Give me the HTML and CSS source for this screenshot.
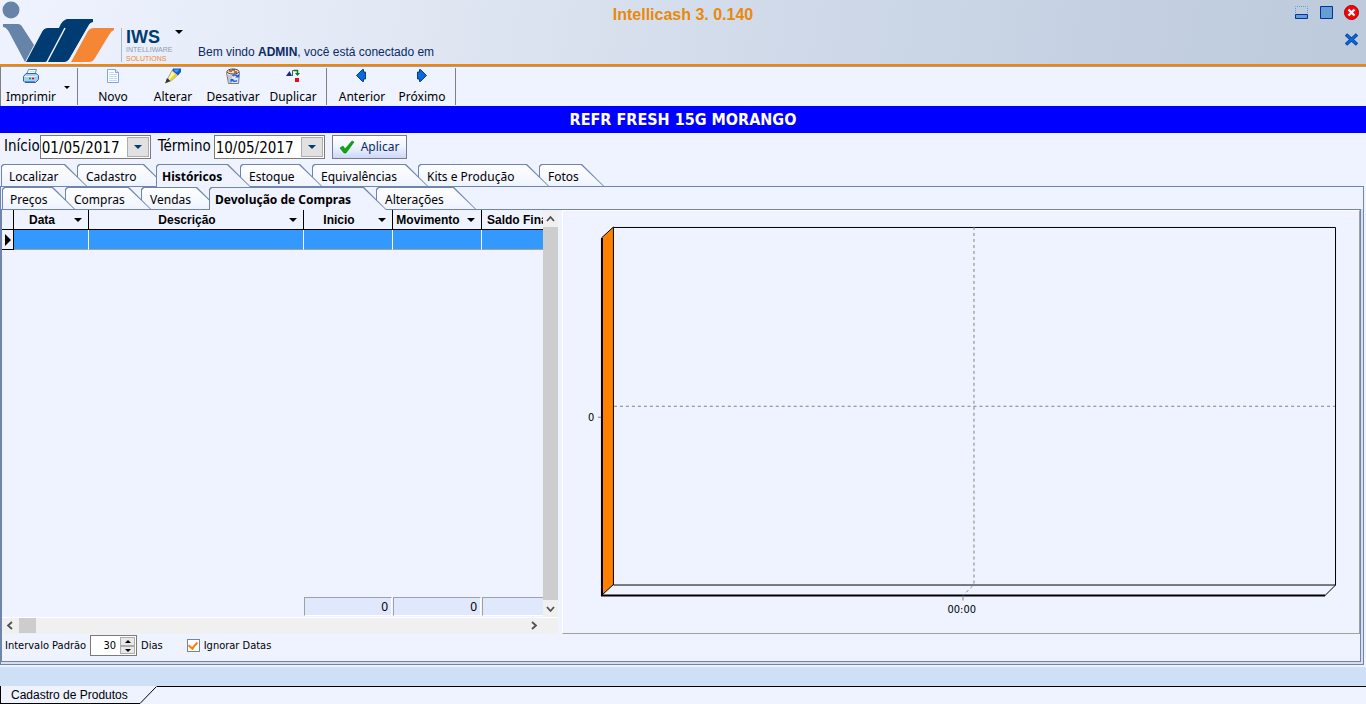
FILE: index.html
```html
<!DOCTYPE html>
<html lang="pt-BR">
<head>
<meta charset="utf-8">
<title>Intellicash</title>
<link rel="stylesheet" href="styles.css">
</head>
<body>
<header class="header">
  <svg class="logo" width="175" height="64" viewBox="0 0 175 64" role="img" aria-label="IWS Intelliware Solutions">
    <circle cx="11" cy="10" r="8.500" fill="#6584a8"/>
    <path d="M3 24h15q3 0 5 4l11 17-9 17L9 32q-3-5-6-5z" fill="#6584a8"/>
    <path d="M26 62l16-30q2-4 6-4h11L67 19h26v3q-3 0-5 4L69 59q-2 3-6 3H48l18-34-16 31q-2 3-5 3z" fill="#003c71"/>
    <path d="M48 62L66 28h-7q3-9 10-9h24v3q-3 0-5 4L69 59q-2 3-6 3z" fill="#003c71"/>
    <path d="M65 28L47 62" stroke="#edf2fd" stroke-width="1.500"/>
    <path d="M71 62l17-31q2-3 6-3h20v2q-3 1-5 5L95 58q-2 4-6 4z" fill="#f58634"/>
    <path d="M121.500 28v34" stroke="#a9b9cc"/>
    <text x="126" y="43" class="logo-iws">IWS</text>
    <text x="126" y="52" class="logo-name">INTELLIWARE</text>
    <text x="126" y="61" class="logo-sub">SOLUTIONS</text>
  </svg>
  <button class="logo-menu" aria-label="Menu"><span class="caret"></span></button>
  <p class="welcome">Bem vindo <b>ADMIN</b>, você está conectado em</p>
  <h1 class="title">Intellicash 3. 0.140</h1>
  <div class="window-buttons">
    <button aria-label="Minimizar"><svg width="15" height="15" viewBox="0 0 15 15"><path d="M1.500 8V1.500h12V8" fill="none" stroke="#649ed2" stroke-dasharray="1 1"/><path d="M1.500 9.500h12v4h-12z" fill="#649ed2" stroke="#0032a0"/></svg></button>
    <button aria-label="Maximizar"><svg width="15" height="15" viewBox="0 0 15 15"><path d="M1.500 1.500h12v12h-12z" fill="#649ed2" stroke="#0032a0"/></svg></button>
    <button aria-label="Fechar"><svg width="15" height="15" viewBox="0 0 15 15"><circle cx="7.500" cy="7.500" r="7" fill="#f00" stroke="#a00010"/><path d="M4.500 4.500l6 6m0-6l-6 6" stroke="#fff" stroke-width="2.400"/></svg></button>
    <button class="close-page" aria-label="Fechar página"><svg width="15" height="15" viewBox="0 0 15 15"><path d="M2 2.500l11 10m0-10L2 12.500" stroke="#003c9c" stroke-width="3.400"/><path d="M2.500 3l10 9m0-9l-10 9" stroke="#0a6ad8" stroke-width="2"/></svg></button>
  </div>
</header>

<nav class="toolbar">
  <button class="tool print"><svg width="16" height="16" viewBox="0 0 16 16"><path d="M5.500 1.500h8l-2 5h-8z" fill="#fff" stroke="#5a8fd0"/><path d="M6.500 3.500h5M5.500 5.500h5" stroke="#e0d8d8"/><path d="M.5 8.500l2.500-3h10l2.500 2v4l-3 3H2l-1.500-1.500z" fill="#a9cdf5" stroke="#2e63b0"/><path d="M1.500 8.500h10l3-1" fill="none" stroke="#e8f3ff"/><path d="M6 10.500h2" stroke="#0a0" stroke-width="1.500"/><path d="M9 10.500h2" stroke="#e00" stroke-width="1.500"/><path d="M2 13.500h10" stroke="#4f8fd8"/></svg>Imprimir</button>
  <button class="tool-drop" aria-label="Opções de impressão"><span class="caret small"></span></button>
  <span class="sep"></span>
  <button class="tool"><svg width="16" height="16" viewBox="0 0 16 16"><path d="M2.500 1.500h8l3 3v10h-11z" fill="#fff" stroke="#7da7d8"/><path d="M10.500 1.500v3h3" fill="#d6e8fa" stroke="#7da7d8"/><path d="M4 4.500h5M4 6.500h8M4 8.500h8M4 10.500h8M4 12.500h8" stroke="#c3dbf3"/></svg>Novo</button>
  <button class="tool"><svg width="16" height="16" viewBox="0 0 16 16"><path d="M8 .5h8V4l-3 3.500-6-5z" fill="#0d5bc8"/><path d="M9.500 1.500h5l-3 3-2.500-2z" fill="#4a97f0"/><path d="M7 2.500l5.500 5L6 13l-4 1 1.500-5z" fill="#fff3a0" stroke="#8d8a60" stroke-width=".7"/><path d="M10.500 5.500l2 2L6 13l-1.500-1.500z" fill="#e5cf4a"/><path d="M0 15.500L2 10l3.500 3z" fill="#333"/></svg>Alterar</button>
  <button class="tool"><svg width="16" height="16" viewBox="0 0 16 16"><path d="M1.500 4.500h13l-1 11h-10z" fill="#e6e6ee" stroke="#778"/><path d="M4 7v8M6 7v8" stroke="#aab"/><ellipse cx="8" cy="3.500" rx="6" ry="2.500" fill="#f5e2a0" stroke="#444"/><path d="M4 3h3M9 4h3" stroke="#c33" stroke-width="1.500"/><path d="M7 2h3" stroke="#333"/><path d="M12.500 8a3.500 3.500 0 0 0-5 0M6.500 11a3.500 3.500 0 0 0 5.500 1.500" fill="none" stroke="#1464f0" stroke-width="1.600"/><path d="M10 9.500h4V6zM9 11H5.500v3.500z" fill="#1464f0"/></svg>Desativar</button>
  <button class="tool"><svg width="16" height="16" viewBox="0 0 16 16"><path d="M1 8l3.500-5L7 8z" fill="#142d82"/><path d="M7.500 8V2.500H12" fill="none" stroke="#555"/><path d="M9 2.500h3.500V6" fill="none" stroke="#087a18" stroke-width="1.500"/><path d="M10 5h5l-2.500 3z" fill="#087a18"/><path d="M10 10h4v4h-4z" fill="#f20a0a"/></svg>Duplicar</button>
  <span class="sep"></span>
  <button class="tool"><svg width="16" height="16" viewBox="0 0 16 16"><path d="M2.500 7.500l6-6h1V4h2v7h-2v2.500h-1z" fill="#0a6ad8" stroke="#003c9c"/></svg>Anterior</button>
  <button class="tool"><svg width="16" height="16" viewBox="0 0 16 16"><path d="M12.500 7.500l-6-6h-1V4h-2v7h2v2.500h1z" fill="#0a6ad8" stroke="#003c9c"/></svg>Próximo</button>
  <span class="sep"></span>
</nav>

<h2 class="banner">REFR FRESH 15G MORANGO</h2>

<form class="filters">
  <label for="ini">Início</label>
  <span class="date"><input id="ini" type="text" value="01/05/2017"><button type="button" aria-label="Abrir calendário"><span class="caret blue"></span></button></span>
  <label for="fim">Término</label>
  <span class="date"><input id="fim" type="text" value="10/05/2017"><button type="button" aria-label="Abrir calendário"><span class="caret blue"></span></button></span>
  <button type="button" class="apply"><svg width="16" height="16" viewBox="0 0 16 16"><path d="M1 9l3-2 2 3 7-8 2 1-8 11H5z" fill="#0aa80a" stroke="#067a06" stroke-width=".6"/></svg>Aplicar</button>
</form>

<div class="tabs" role="tablist">
  <button class="tab w-loc" role="tab">Localizar</button>
  <button class="tab w-cad" role="tab">Cadastro</button>
  <button class="tab w-his selected" role="tab" aria-selected="true">Históricos</button>
  <button class="tab w-est" role="tab">Estoque</button>
  <button class="tab w-equ" role="tab">Equivalências</button>
  <button class="tab w-kit" role="tab">Kits e Produção</button>
  <button class="tab w-fot" role="tab">Fotos</button>
</div>
<main class="outer">
  <div class="tabs" role="tablist">
    <button class="tab w-pre" role="tab">Preços</button>
    <button class="tab w-com" role="tab">Compras</button>
    <button class="tab w-ven" role="tab">Vendas</button>
    <button class="tab w-dev selected" role="tab" aria-selected="true">Devolução de Compras</button>
    <button class="tab w-alt" role="tab">Alterações</button>
  </div>
  <section class="inner">
    <div class="split">
      <div class="grid">
        <div class="grid-main">
          <div class="grid-view">
            <table class="rows">
              <colgroup><col class="c-mark"><col class="c-data"><col class="c-desc"><col class="c-num"><col class="c-num"><col class="c-num"></colgroup>
              <thead><tr>
                <th></th>
                <th><div class="head"><span>Data</span><i class="caret"></i></div></th>
                <th><div class="head"><span>Descrição</span><i class="caret"></i></div></th>
                <th><div class="head"><span>Inicio</span><i class="caret"></i></div></th>
                <th><div class="head"><span>Movimento</span><i class="caret"></i></div></th>
                <th><div class="head last"><span>Saldo Final</span><i class="caret"></i></div></th>
              </tr></thead>
              <tbody><tr><td class="marker"><span></span></td><td></td><td></td><td></td><td></td><td></td></tr></tbody>
            </table>
            <div class="totals"><span>0</span><span>0</span><span></span></div>
          </div>
          <div class="vscroll">
            <svg width="15" height="17" viewBox="0 0 15 17"><path d="M4 11l3.500-4 3.500 4" fill="none" stroke="#505050" stroke-width="1.800"/></svg>
            <div class="thumb"></div>
            <svg width="15" height="17" viewBox="0 0 15 17"><path d="M4 7l3.500 4L11 7" fill="none" stroke="#505050" stroke-width="1.800"/></svg>
          </div>
        </div>
        <div class="hscroll">
          <svg width="17" height="15" viewBox="0 0 17 15"><path d="M10 4L6 7.500l4 3.500" fill="none" stroke="#505050" stroke-width="1.800"/></svg>
          <div class="thumb"></div>
          <svg class="end" width="17" height="15" viewBox="0 0 17 15"><path d="M7 4l4 3.500L7 11" fill="none" stroke="#505050" stroke-width="1.800"/></svg>
        </div>
      </div>
      <div class="chart">
        <svg viewBox="0 0 797 423" role="img" aria-label="Gráfico">
          <path d="M38.500 27l12-11v358l-12 11z" fill="#ff8000"/>
          <path d="M38.500 27l12-11M50.500 374l-12 11M773.500 374.500l-11 11" stroke="#000" fill="none"/>
          <path d="M50.500 16.500h723v358h-723z" fill="none" stroke="#000"/>
          <path d="M39 27v359M38 385h725" fill="none" stroke="#000" stroke-width="2"/>
          <path d="M411.500 16v358l-11 11M51 195.500h722" fill="none" stroke="#808080" stroke-dasharray="3 3"/>
          <path d="M35 206.500h3M400.500 386v4" fill="none" stroke="#808080"/>
          <text x="25" y="210">0</text>
          <text x="385" y="403">00:00</text>
        </svg>
      </div>
    </div>
    <div class="options">
      <label for="dias">Intervalo Padrão</label>
      <span class="spin"><input id="dias" type="text" value="30"><span class="spin-buttons"><button aria-label="Mais"><i class="up"></i></button><button aria-label="Menos"><i class="down"></i></button></span></span>
      <span>Dias</span>
      <label class="check"><input type="checkbox" checked>Ignorar Datas</label>
    </div>
  </section>
</main>
<footer class="footer">
  <div class="windows">
    <button class="window-tab">Cadastro de Produtos</button>
    <svg width="17" height="18" viewBox="0 0 17 18"><path d="M0 17.500L16.500 .5" fill="none" stroke="#000"/></svg>
    <div class="rest"></div>
  </div>
</footer>
</body>
</html>
```
FILE: styles.css
```css
* { box-sizing: border-box; }
body {
  margin: 0;
  min-height: 100vh;
  display: flex;
  flex-direction: column;
  background: #eef3ff;
  color: #000;
  font: 12px/16px "Noto Sans", sans-serif;
}
button { border: 0; padding: 0; background: none; font: inherit; color: inherit; }
svg { display: block; flex: none; }
h1, h2, p { margin: 0; }
.caret { flex: none; display: block; width: 0; border: 4px solid transparent; border-top-color: #000; border-bottom: 0; }
.caret.small { border-width: 3px 3px 0; }
.caret.blue { border-top-color: #003c71; }

.header {
  position: relative;
  height: 66px;
  display: flex;
  align-items: flex-start;
  border-bottom: 2px solid #f0870a;
  background: linear-gradient(100deg, #eef3ff 0%, #e4eaf5 25%, #ced8e8 60%, #bccadc 100%);
}
.logo-iws { font: bold 18px "Liberation Sans", sans-serif; fill: #003c71; }
.logo-name, .logo-sub { font: 7px "Liberation Sans", sans-serif; fill: #8a9bb5; }
.logo-sub { fill: #f58634; }
.logo-menu { margin: 30px 15px 0 0; }
.welcome { margin-top: 44px; font: 12px/16px "Liberation Sans", sans-serif; color: #0a2a66; }
.title {
  position: absolute;
  inset: 6px 0 auto;
  text-align: center;
  font: bold 16px/18px "Liberation Sans", sans-serif;
  color: #e8890c;
}
.window-buttons {
  position: relative;
  margin: 5px 7px 0 auto;
  display: grid;
  grid-template-columns: repeat(3, 15px);
  gap: 12px 10px;
}
.close-page { grid-column: 3; }

.toolbar {
  height: 40px;
  display: flex;
  border-top: 1px solid #a0a0a0;
  border-left: 1px solid #808080;
  padding-top: 1px;
}
.tool { width: 60px; display: flex; flex-direction: column; align-items: center; gap: 5px; }
.tool-drop { width: 13px; padding: 18px 3px 0; align-self: flex-start; }
.sep { width: 1px; height: 37px; margin: 0 5px 0 3px; background: #808080; }
.banner {
  background: #00f;
  color: #fff;
  text-align: center;
  font: bold 16px/27px "DejaVu Sans Condensed", "Noto Sans", sans-serif;
}

.filters {
  height: 31px;
  display: flex;
  align-items: flex-start;
  padding: 2px 4px 0;
  font: 15px/22px "DejaVu Sans Condensed", "Noto Sans", sans-serif;
}
.date {
  width: 111px;
  height: 24px;
  display: flex;
  padding: 1px;
  margin-right: 7px;
  border: 1px solid #7a7a7a;
  background: #fff;
}
.date + label { margin-right: 3px; }
.date input { flex: 1; min-width: 0; border: 0; padding: 2px 0 0; background: none; font: inherit; }
.date button { width: 22px; display: grid; place-items: center; background: #e1e1e1; border: 1px solid #adadad; }
.apply {
  width: 75px;
  height: 24px;
  display: flex;
  align-items: center;
  gap: 6px;
  padding-left: 6px;
  border: 1px solid #7a7a8a;
  background: linear-gradient(#fff, #eef3ff 50%, #ccd8f8);
  color: #0a2a66;
  font: 12px/16px "Noto Sans", sans-serif;
}

.tabs { display: flex; position: relative; z-index: 1; height: 23px; margin-bottom: -1px; padding-left: 1px; }
.tab {
  position: relative;
  z-index: 1;
  height: 23px;
  margin-right: -11px;
  padding: 2px 0 0 9px;
  text-align: left;
  white-space: nowrap;
}
.tab::before, .tab::after { content: ""; position: absolute; inset: 0; z-index: -1; }
.tab::before {
  background: #6f85ad;
  clip-path: polygon(0 2px, 2px 0, calc(100% - 23px) 0, 100% 100%, 0 100%);
}
.tab::after {
  background: linear-gradient(#fff, #eef3ff);
  clip-path: polygon(1px 3px, 3px 1px, calc(100% - 24px) 1px, calc(100% - 2px) calc(100% - 1px), 1px calc(100% - 1px));
}
.tab:nth-child(1) { z-index: 7; padding-left: 8px; }
.tab:nth-child(2) { z-index: 6; }
.tab:nth-child(3) { z-index: 5; }
.tab:nth-child(4) { z-index: 4; }
.tab:nth-child(5) { z-index: 3; }
.tab:nth-child(6) { z-index: 2; }
.tab.selected { z-index: 8; padding-left: 6px; font-weight: bold; }
.tab.selected::after {
  background: #eef3ff;
  clip-path: polygon(1px 3px, 3px 1px, calc(100% - 24px) 1px, calc(100% - 1px) 100%, 1px 100%);
}
.w-loc { width: 87px; }
.w-cad { width: 90px; }
.w-his { width: 95px; }
.w-est { width: 83px; }
.w-equ { width: 117px; }
.w-kit { width: 132px; }
.w-fot { width: 66px; }
.w-pre { width: 74px; }
.w-com { width: 87px; }
.w-ven { width: 79px; }
.w-dev { width: 178px; }
.w-alt { width: 101px; }

.outer {
  flex: 1;
  display: flex;
  flex-direction: column;
  margin: 0 2px 2px 0;
  padding: 0 2px 2px 0;
  border: 1px solid #6f85ad;
  background: linear-gradient(#eef3ff 22px, #d9dfea 22px);
}
.inner {
  flex: 1;
  display: flex;
  flex-direction: column;
  border: 1px solid #6f85ad;
  background: #eef3ff;
}
.split { flex: 1; display: flex; gap: 4px; }
.grid { flex: 0 0 556px; min-width: 0; display: flex; flex-direction: column; }
.grid-main { flex: 1; display: flex; border-bottom: 1px solid #fff; }
.grid-view { flex: 1; min-width: 0; overflow: hidden; display: flex; flex-direction: column; justify-content: space-between; }
.rows { width: 569px; table-layout: fixed; border-collapse: separate; border-spacing: 0; }
.c-mark { width: 12px; }
.c-data { width: 75px; }
.c-desc { width: 215px; }
.c-num { width: 89px; }
.rows th {
  height: 20px;
  padding: 0;
  border-right: 1px solid #000;
  border-bottom: 1px solid #000;
  font: bold 12px/18px "Liberation Sans", sans-serif;
}
.head { display: flex; align-items: center; padding: 0 6px 0 2px; white-space: nowrap; }
.head span { flex: 1; padding-right: 6px; }
.head.last { padding-left: 5px; }
.rows td { height: 20px; padding: 0; background: #39f; border-right: 1px solid #fff; border-bottom: 1px solid #a0a0a0; }
.rows .marker { background: #eef3ff; border-right-color: #000; border-bottom-color: #000; }
.marker span { display: block; width: 6px; margin-left: 3px; border: 6px solid transparent; border-left-color: #000; border-right: 0; }
.totals { display: flex; gap: 1px; padding-left: 302px; margin-bottom: 1px; }
.totals span {
  flex: none;
  width: 88px;
  height: 19px;
  padding-right: 3px;
  text-align: right;
  line-height: 18px;
  border: 1px solid #a0a0a0;
  border-right-color: #fff;
  border-bottom-color: #fff;
  background: #e0e8fd;
}
.vscroll { flex: none; width: 15px; display: flex; flex-direction: column; background: #f0f0f0; }
.vscroll .thumb { flex: 1; background: #cdcdcd; }
.hscroll { height: 16px; display: flex; background: #f0f0f0; }
.hscroll .thumb { width: 17px; height: 15px; background: #cdcdcd; }
.hscroll .end { margin: 0 16px 0 auto; }
.chart {
  flex: 1;
  min-width: 0;
  border: 1px solid #fff;
  border-right-color: #a0a0a0;
  border-bottom-color: #a0a0a0;
}
.chart svg { width: 100%; }
.chart text { font: 11px "DejaVu Sans Condensed", "Noto Sans", sans-serif; }

.options {
  height: 27px;
  display: flex;
  align-items: center;
  gap: 4px;
  padding: 0 3px 4px;
  font: 11px/16px "DejaVu Sans Condensed", "Noto Sans", sans-serif;
}
.spin { width: 47px; height: 21px; display: flex; padding: 1px; border: 1px solid #7a7a7a; background: #fff; }
.spin input { flex: 1; min-width: 0; border: 0; padding: 0 4px 0 0; background: none; text-align: right; font: inherit; }
.spin-buttons { width: 15px; display: grid; }
.spin button { display: grid; place-items: center; background: #e8e8e8; border: 1px solid #adadad; }
.up, .down { border: 3px solid transparent; }
.up { border-bottom-color: #000; border-top: 0; }
.down { border-top-color: #000; border-bottom: 0; }
.check { display: flex; align-items: center; gap: 4px; margin-left: 20px; }
.check input {
  appearance: none;
  width: 13px;
  height: 13px;
  margin: 0;
  border: 1px solid #6f85ad;
  background: #fff;
  display: grid;
  place-items: center;
}
.check input:checked::before {
  content: "";
  width: 4px;
  height: 7px;
  margin-bottom: 2px;
  border: solid #ff8000;
  border-width: 0 2px 2px 0;
  transform: rotate(40deg);
}

.footer { padding-top: 19px; background: #cde0f5; }
.windows { height: 18px; display: flex; background: #eef3ff; }
.window-tab {
  height: 18px;
  padding: 0 12px 0 10px;
  border-left: 1px solid #000;
  border-bottom: 1px solid #000;
  font: 12px/16px "Liberation Sans", sans-serif;
}
.rest { flex: 1; border-top: 1px solid #000; }
```
